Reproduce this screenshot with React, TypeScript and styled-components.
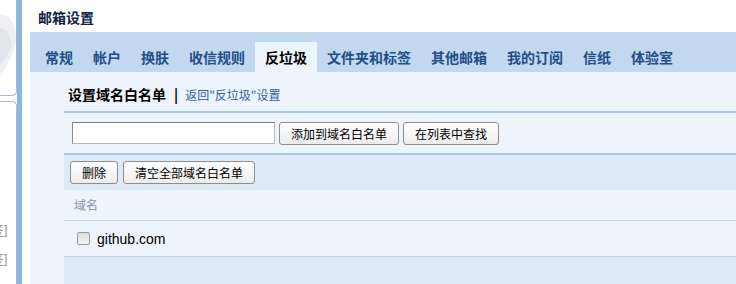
import React from 'react'
import styled, { createGlobalStyle } from 'styled-components'

const GlobalStyle = createGlobalStyle`
  html, body {
    margin: 0;
    padding: 0;
    background: #ffffff;
  }
  body {
    font-family: "Noto Sans CJK SC", "DejaVu Sans", sans-serif;
    font-size: 12px;
  }
`

const tabs = ['常规', '帐户', '换肤', '收信规则', '反垃圾', '文件夹和标签', '其他邮箱', '我的订阅', '信纸', '体验室']

const App = () => {
  return (
    <>
      <GlobalStyle />
      <Page>
        <Sidebar>
          <SideColumn>
            <SidePanel $top>
              <Swoosh viewBox="0 0 16 95">
                <path d="M-10 18 Q 14 6 16 40 Q 10 70 -10 84 Z" fill="#eef0f3" />
                <path d="M-10 30 Q 8 22 12 44 Q 6 64 -10 72 Z" fill="#e2e6eb" />
              </Swoosh>
            </SidePanel>
            <SidePanel>
              <SideLink>[标签]</SideLink>
              <SideLink>[标签]</SideLink>
            </SidePanel>
          </SideColumn>
          <BlueBar />
        </Sidebar>

        <Main>
          <Title>邮箱设置</Title>
          <TabBar>
            {tabs.map(t => (
              <Tab key={t} $active={t === '反垃圾'}>{t}</Tab>
            ))}
          </TabBar>

          <Content>
            <Heading>
              <strong>设置域名白名单</strong>
              <Divider>|</Divider>
              <BackLink>返回"反垃圾"设置</BackLink>
            </Heading>

            <InputRow>
              <TextBox type="text" />
              <Button>添加到域名白名单</Button>
              <Button>在列表中查找</Button>
            </InputRow>

            <Toolbar>
              <Button>删除</Button>
              <Button>清空全部域名白名单</Button>
            </Toolbar>

            <ColumnHead>域名</ColumnHead>

            <Row>
              <Check type="checkbox" />
              <Domain>github.com</Domain>
            </Row>

            <Footer />
          </Content>
        </Main>
      </Page>
    </>
  )
}

export default App

const Page = styled.div`
  display: flex;
  width: 736px;
  height: 284px;
  overflow: hidden;
`

const Sidebar = styled.div`
  display: flex;
  width: 22px;
  margin-right: 8px;
  flex-shrink: 0;
`

const SideColumn = styled.div`
  width: 17px;
  display: flex;
  flex-direction: column;
  gap: 5px;
`

const SidePanel = styled.div<{ $top?: boolean }>`
  background: #fff;
  border-right: 1px solid #a9b9cc;
  border-bottom: ${p => (p.$top ? '1px solid #a9b9cc' : 'none')};
  border-top: ${p => (p.$top ? 'none' : '1px solid #a9b9cc')};
  border-radius: ${p => (p.$top ? '0 0 5px 0' : '0 5px 0 0')};
  height: ${p => (p.$top ? '95px' : 'auto')};
  flex: ${p => (p.$top ? '0 0 auto' : '1')};
  overflow: hidden;
  display: flex;
  flex-direction: column;
  align-items: flex-end;
  gap: 14px;
  padding-top: ${p => (p.$top ? '0' : '120px')};
`

const Swoosh = styled.svg`
  width: 16px;
  height: 95px;
  display: block;
`

const SideLink = styled.div`
  padding-right: 8px;
  white-space: nowrap;
  color: #8a8a8a;
  font-size: 13px;
  line-height: 15px;
`

const BlueBar = styled.div`
  width: 5px;
  background: #8db4e3;
`

const Main = styled.div`
  flex: 1;
  display: flex;
  flex-direction: column;
  min-width: 0;
`

const Title = styled.div`
  height: 32px;
  line-height: 34px;
  padding-left: 8px;
  font-size: 14px;
  color: #10223f;
  font-weight: bold;
`

const TabBar = styled.div`
  height: 40px;
  background: #c2d8f1;
  display: flex;
  align-items: flex-end;
  padding-left: 5px;
`

const Tab = styled.div<{ $active?: boolean }>`
  height: 30px;
  line-height: 30px;
  padding: 0 10px;
  font-size: 14px;
  font-weight: bold;
  white-space: nowrap;
  color: ${p => (p.$active ? '#000' : '#234d85')};
  background: ${p => (p.$active ? '#eef4fb' : 'transparent')};
`

const Content = styled.div`
  flex: 1;
  background: #eef4fb;
  padding-left: 34px;
  display: flex;
  flex-direction: column;
`

const Heading = styled.div`
  height: 41px;
  display: flex;
  align-items: flex-end;
  padding: 0 0 7px 4px;
  box-sizing: border-box;
  border-bottom: 2px solid #a7c7e8;
  font-size: 14px;
  color: #000;

  strong {
    font-weight: bold;
  }
`

const Divider = styled.span`
  font-weight: bold;
  margin: 0 7px 0 8px;
`

const BackLink = styled.span`
  font-size: 12px;
  color: #30619f;
  padding-bottom: 1px;
`

const InputRow = styled.div`
  height: 40px;
  display: flex;
  align-items: center;
  gap: 4px;
  padding-left: 8px;
  border-bottom: 2px solid #a7c7e8;
`

const TextBox = styled.input`
  width: 203px;
  height: 22px;
  box-sizing: border-box;
  margin: 0;
  border: 1px solid #b9b9b9;
  border-top-color: #7c7c7c;
  border-left-color: #8c8c8c;
  background: #fff;
  outline: none;
`

const Button = styled.button`
  height: 23px;
  padding: 0 11px;
  margin: 0;
  font-family: "Noto Sans CJK SC", sans-serif;
  font-size: 12px;
  line-height: 21px;
  color: #000;
  border: 1px solid #8e8e8e;
  border-radius: 3px;
  background: linear-gradient(#ffffff, #ececec);
`

const Toolbar = styled.div`
  height: 35px;
  display: flex;
  align-items: center;
  gap: 5px;
  padding-left: 6px;
  background: #dfeaf8;
`

const ColumnHead = styled.div`
  height: 30px;
  line-height: 30px;
  padding-left: 10px;
  color: #8797ab;
  font-size: 12px;
  border-bottom: 1px solid #c5d6e7;
`

const Row = styled.div`
  height: 35px;
  display: flex;
  align-items: center;
  padding-left: 13px;
  border-bottom: 1px solid #c5d6e7;
`

const Check = styled.input`
  appearance: none;
  width: 13px;
  height: 13px;
  margin: 0 7px 0 0;
  box-sizing: border-box;
  border: 1px solid #9c9c9c;
  border-radius: 2px;
  background: linear-gradient(#dcdcdc, #f4f4f4);
`

const Domain = styled.span`
  font-family: "Liberation Sans", sans-serif;
  font-size: 14px;
  color: #000;
`

const Footer = styled.div`
  flex: 1;
  background: #dfeaf8;
`
